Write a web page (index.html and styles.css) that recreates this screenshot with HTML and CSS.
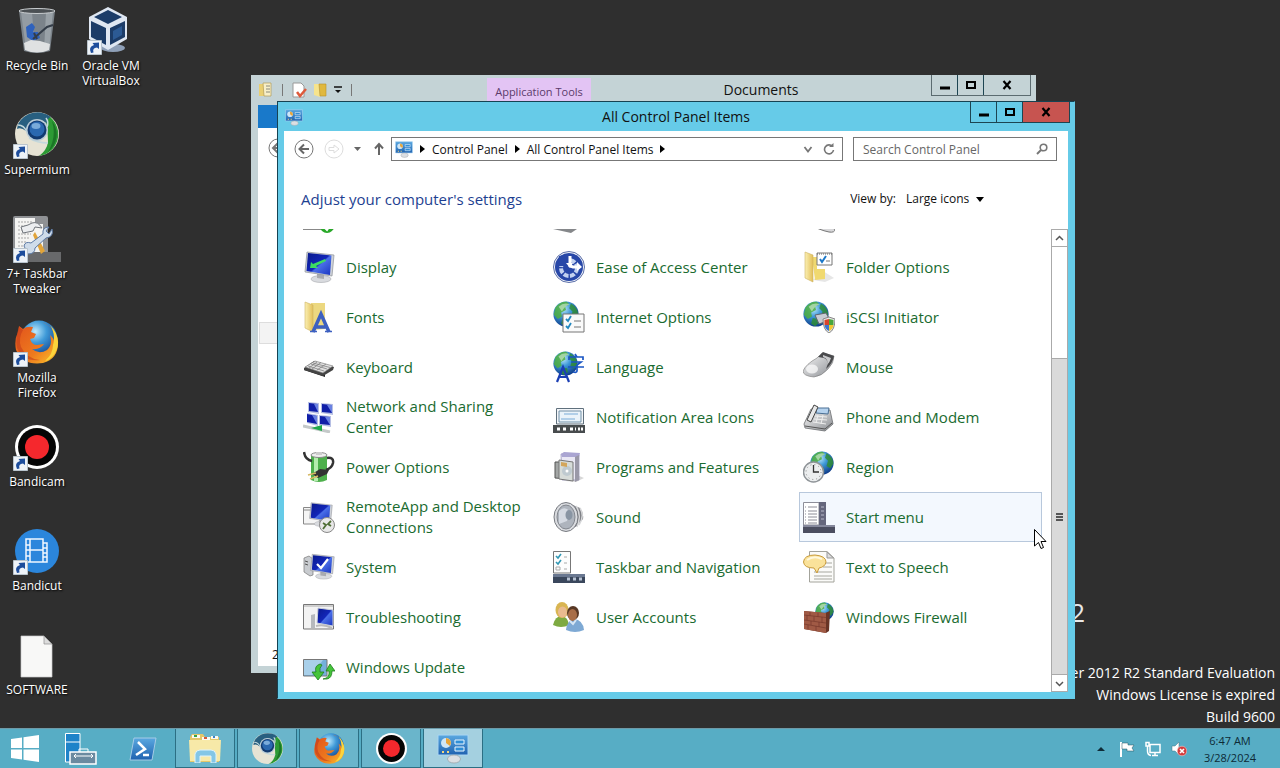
FILE: index.html
```html
<!DOCTYPE html>
<html lang="en">
  <head>
    <meta charset="utf-8">
    <meta name="viewport" content="width=device-width, initial-scale=1.0">
    <title>All Control Panel Items</title>
    <link rel="stylesheet" href="styles.css">
  </head>
  <body>
    <!-- shared icon parts -->
    <svg class="sprite" aria-hidden="true">
      <defs>
        <radialGradient id="g-globe" cx="0.4" cy="0.3" r="0.75">
          <stop offset="0" stop-color="#bfe9fb"/>
          <stop offset="0.4" stop-color="#3f9ad8"/>
          <stop offset="1" stop-color="#0a3484"/>
        </radialGradient>
        <linearGradient id="g-screen" x1="0" y1="0" x2="1" y2="1">
          <stop offset="0" stop-color="#0a1a8c"/>
          <stop offset="0.5" stop-color="#1226b8"/>
          <stop offset="0.55" stop-color="#4a6fe8"/>
          <stop offset="1" stop-color="#1a34c0"/>
        </linearGradient>
        <linearGradient id="g-folder" x1="0" y1="0" x2="1" y2="0">
          <stop offset="0" stop-color="#fbf0b4"/>
          <stop offset="1" stop-color="#e2bf58"/>
        </linearGradient>
        <linearGradient id="g-grey" x1="0" y1="0" x2="1" y2="1">
          <stop offset="0" stop-color="#fafafa"/>
          <stop offset="1" stop-color="#8a8d92"/>
        </linearGradient>
        <linearGradient id="g-fox" x1="0" y1="0" x2="1" y2="1">
          <stop offset="0" stop-color="#e0501c"/>
          <stop offset="0.6" stop-color="#ee7a1e"/>
          <stop offset="1" stop-color="#fbc72c"/>
        </linearGradient>
        <linearGradient id="g-blue" x1="0" y1="0" x2="0" y2="1">
          <stop offset="0" stop-color="#5aa8e0"/>
          <stop offset="1" stop-color="#1f62b0"/>
        </linearGradient>
      </defs>
      <symbol id="globe" viewBox="0 0 32 32">
        <circle cx="16" cy="16" r="15.500" fill="url(#g-globe)"/>
        <path d="M3 8Q9 0 17 1L20 4L15 7L16 11L10 14L11 19L6 22L1 17Z" fill="#4fae3e" opacity="0.85"/>
        <path d="M22 3Q31 8 31 17L27 23L22 20L24 13L20 9ZM12 21L18 22L19 27L15 31L10 28Z" fill="#2f8f2e" opacity="0.8"/>
        <path d="M7 7Q13 1 21 4Q14 6 11 13Z" fill="#fff" opacity="0.45"/>
      </symbol>
      <symbol id="monitor" viewBox="0 0 32 32">
        <ellipse cx="18" cy="28" rx="10" ry="3.500" fill="#d9dbdf" stroke="#a6a8ad" stroke-width="0.600"/>
        <path d="M14 22L21 24L21 28L14 27Z" fill="#a9abb0"/>
        <path d="M4 1L31 4L29 25L2 21Z" fill="#cfd3da" stroke="#8d9096" stroke-width="0.700"/>
        <path d="M5 2L28.500 4.500L27 24L3.500 20Z" fill="url(#g-screen)"/>
      </symbol>
      <symbol id="cpanel" viewBox="0 0 32 32">
        <path d="M1 3H31V23H1Z" fill="url(#g-blue)" stroke="#a9d5f2"/>
        <circle cx="9" cy="11" r="5" fill="#cfe6f6"/>
        <path d="M9 11V6A5 5 0 0 1 13 14Z" fill="#e8a53a"/>
        <path d="M18 8H27V12H18ZM18 15H27V19H18Z" fill="#2f8ed6" stroke="#e9f5ff"/>
        <path d="M5 20H7M10 20H12" stroke="#f3d680" stroke-width="2"/>
        <ellipse cx="17" cy="27" rx="6.500" ry="4" fill="#dcdfe3" stroke="#9a9da2" stroke-width="0.700"/>
      </symbol>
      <symbol id="supermium" viewBox="0 0 44 44">
        <circle cx="22" cy="22" r="22" fill="#e6e3d4"/>
        <path d="M3 12A22 22 0 0 1 36 5Q31 8 33 13Q28 7 20 8Q12 10 11 19Q6 15 2 17Z" fill="#285f80"/>
        <path d="M35 5A22 22 0 0 1 24 44Q32 38 33 30Q33 23 32 17Q30 10 35 5Z" fill="#2c9a34"/>
        <path d="M37 9A22 22 0 0 1 33 40Q42 25 37 9Z" fill="#1b7526"/>
        <path d="M3 13Q9 13 12 20M32 15Q34 10 31 6M14 26Q22 31 33 31" fill="none" stroke="#c3d8dc" stroke-width="1.500"/>
        <circle cx="22" cy="18" r="11" fill="#b9cbd6"/>
        <circle cx="22" cy="18" r="9.500" fill="#123a70"/>
        <circle cx="22" cy="17" r="7.500" fill="#2a68b0"/>
        <ellipse cx="21" cy="14" rx="4.500" ry="3" fill="#9cc8ec" opacity="0.7"/>
      </symbol>
      <symbol id="firefox" viewBox="0 0 44 44">
        <circle cx="24" cy="19" r="18.500" fill="url(#g-globe)"/>
        <path d="M26 2Q41 7 43 23Q43 39 28 43Q8 46 1 30Q-1 20 3 12L4 6L8 9Q12 6 18 7L16 12L21 14L19 18L15 19Q17 25 22 25L29 24Q25 30 17 29Q24 35 32 30Q38 25 35 15Q40 19 39 24Q42 12 34 6Q30 3 26 2Z" fill="url(#g-fox)"/>
        <path d="M35 5Q46 16 42 29Q38 39 30 41Q38 34 38 25Q41 14 35 5Z" fill="#fbd43c"/>
        <path d="M4 7L8 10Q3 18 6 27Q12 39 25 40Q8 42 2 28Q0 17 4 7Z" fill="#c43e1b" opacity="0.6"/>
      </symbol>
      <symbol id="bandicam" viewBox="0 0 44 44">
        <circle cx="22" cy="22" r="22" fill="#fff"/>
        <circle cx="22" cy="22" r="19" fill="#050505"/>
        <circle cx="22" cy="22" r="12" fill="#f5282d"/>
      </symbol>
      <symbol id="arrow-link" viewBox="0 0 15 15">
        <path d="M0.500 0.500H14.500V14.500H0.500Z" fill="#eef3f8" stroke="#b9c4cd"/>
        <path d="M4 13Q1 7 7 5L5.500 3L12 2.500L12 9L10 7.500Q5 8 6.500 12.500Z" fill="#1d4d9c"/>
      </symbol>
    </svg>

    <div class="desktop">
      <div class="desktop-icons">
        <a href="#" class="shortcut">
          <svg class="shortcut-icon" viewBox="0 0 48 48">
            <path d="M6 4L11 44Q24 48 37 44L42 4Z" fill="#7b838a"/>
            <path d="M8 5L13 43Q18 45 22 45L19 5Z" fill="#a5adb4" opacity="0.6"/>
            <path d="M33 5L31 44L36 43L40 5Z" fill="#aeb6bb" opacity="0.6"/>
            <path d="M13 20L19 16L22 20L20 25L25 25L27 31L20 34L14 30Z" fill="#2f62bd"/>
            <path d="M20 32L34 20L40 18M21 26L24 32" fill="none" stroke="#343d48" stroke-width="2"/>
            <path d="M11 36L18 33L27 34L37 37L36 43Q24 48 12 43Z" fill="#dfe1e2"/>
            <ellipse cx="24" cy="4" rx="18" ry="2.500" fill="#4b5054" stroke="#c9cdd0"/>
          </svg>
          <span>Recycle Bin</span>
        </a>
        <a href="#" class="shortcut">
          <svg class="shortcut-icon" viewBox="0 0 48 48">
            <use href="#supermium" x="2" y="1" width="44" height="44"/>
            <use href="#arrow-link" x="0" y="33" width="15" height="15"/>
          </svg>
          <span>Supermium</span>
        </a>
        <a href="#" class="shortcut">
          <svg class="shortcut-icon" viewBox="0 0 48 48">
            <rect x="0" y="1" width="35" height="40" rx="2" fill="#8f9194"/>
            <path d="M2 3H22V9H30V40H2Z" fill="#f4f4f2"/>
            <path d="M5 7H20M5 11H18M5 15H18M5 19H18M5 23H16M5 27H14M5 31H14" stroke="#a5a5a5" stroke-dasharray="2 1"/>
            <path d="M15 37H48V47H15Z" fill="#68696b"/>
            <path d="M22 17L32 36L28 39L20 20Z" fill="#e1a43a"/>
            <path d="M8 12L15 10L19 8Q25 6 29 13L22 12L20 16L10 18Z" fill="#eceef0" stroke="#70757b"/>
            <path d="M11 31Q12 26 18 28L30 19Q29 12 36 12L33 16L36 19L39 14Q41 22 33 23L22 33Q22 39 15 39Z" fill="#cfdcea" stroke="#5d7aa5"/>
            <use href="#arrow-link" x="0" y="33" width="15" height="15"/>
          </svg>
          <span>7+ Taskbar Tweaker</span>
        </a>
        <a href="#" class="shortcut">
          <svg class="shortcut-icon" viewBox="0 0 48 48">
            <use href="#firefox" x="2" y="1" width="44" height="44"/>
            <use href="#arrow-link" x="0" y="33" width="15" height="15"/>
          </svg>
          <span>Mozilla Firefox</span>
        </a>
        <a href="#" class="shortcut">
          <svg class="shortcut-icon" viewBox="0 0 48 48">
            <use href="#bandicam" x="2" y="2" width="44" height="44"/>
            <use href="#arrow-link" x="0" y="33" width="15" height="15"/>
          </svg>
          <span>Bandicam</span>
        </a>
        <a href="#" class="shortcut">
          <svg class="shortcut-icon" viewBox="0 0 48 48">
            <circle cx="24" cy="24" r="22" fill="#2b86dc"/>
            <path d="M13 12H30V35H13ZM17 12V35M30 12V35M17 23H30M13 18H17M13 23H17M13 29H17M30 16H34V35H30M30 21H34M30 26H34M30 30H34" fill="none" stroke="#f1f8ff" stroke-width="1.500"/>
            <use href="#arrow-link" x="0" y="33" width="15" height="15"/>
          </svg>
          <span>Bandicut</span>
        </a>
        <a href="#" class="shortcut">
          <svg class="shortcut-icon" viewBox="0 0 48 48">
            <path d="M8 5H31L39 13V46H8Z" fill="#f8f8f7" stroke="#c9c9c9" stroke-width="0.700"/>
            <path d="M31 5V13H39Z" fill="#dcdcdc" stroke="#8e8e8e" stroke-width="0.700"/>
          </svg>
          <span>SOFTWARE</span>
        </a>
        <a href="#" class="shortcut">
          <svg class="shortcut-icon" viewBox="0 0 48 48">
            <ellipse cx="26" cy="41" rx="12" ry="4" fill="#8fa0b8"/>
            <path d="M21 0L40 10V32L21 43L2 32V10Z" fill="#dfe7f2"/>
            <path d="M21 3L35 10L21 17L7 10ZM4 14L19 21V38L4 30ZM38 14L23 21V38L38 30Z" fill="#1c3c68"/>
            <path d="M26 24L35 19V28L26 33Z" fill="#2c5a94"/>
            <use href="#arrow-link" x="0" y="33" width="15" height="15"/>
          </svg>
          <span>Oracle VM VirtualBox</span>
        </a>
      </div>

      <div class="brand">2012</div>
      <div class="watermark">
        <p>Windows Server 2012 R2 Standard Evaluation</p>
        <p>Windows License is expired</p>
        <p>Build 9600</p>
      </div>

      <div class="window documents">
        <div class="titlebar">
          <div class="quick-access">
            <svg width="16" height="16" viewBox="0 0 16 16"><path d="M1 2H6V14H1Z" fill="#e9cf72"/><path d="M5 1H13V14H6Z" fill="#f7efc8" stroke="#b29b55" stroke-width="0.700"/><path d="M8 4H12M8 7H12M8 10H12" stroke="#8a8a7c"/></svg>
            <span class="divider"></span>
            <svg width="16" height="16" viewBox="0 0 16 16"><path d="M2 1H10L13 4V15H2Z" fill="#fff" stroke="#999"/><path d="M6 10L9 14L15 7" fill="none" stroke="#dd5a3c" stroke-width="2.500"/></svg>
            <svg width="16" height="16" viewBox="0 0 16 16"><path d="M2 2H7L8 15L2 13Z" fill="#f6e48d"/><path d="M7 2H14V14H8Z" fill="#e0b83e" stroke="#b9922a" stroke-width="0.600"/></svg>
            <svg width="10" height="10" viewBox="0 0 10 10"><path d="M1 2H9" stroke="#111" stroke-width="1.500"/><path d="M2 5H8L5 8Z" fill="#111"/></svg>
            <span class="divider"></span>
          </div>
          <span class="tool-tab">Application Tools</span>
          <h2>Documents</h2>
          <div class="window-buttons">
            <button aria-label="Minimize documents"><svg viewBox="0 0 12 10"><path d="M1 8H11" stroke="#000" stroke-width="3"/></svg></button>
            <button aria-label="Maximize documents"><svg viewBox="0 0 12 10"><path d="M2 2H10V8H2Z" fill="none" stroke="#000" stroke-width="2"/></svg></button>
            <button class="close" aria-label="Close documents"><svg viewBox="0 0 12 10"><path d="M2.500 1L9.500 9M9.500 1L2.500 9" stroke="#000" stroke-width="2.200"/></svg></button>
          </div>
        </div>
        <div class="window-content">
          <div class="file-tab"></div>
          <svg class="documents-back" viewBox="0 0 20 20"><circle cx="10" cy="10" r="9" fill="#fff" stroke="#777"/><path d="M15 10H5M10 5L5 10L10 15" fill="none" stroke="#777" stroke-width="2"/></svg>
          <div class="documents-tree"></div>
          <p class="documents-status">2 items</p>
        </div>
      </div>

      <div class="window control-panel">
        <div class="titlebar">
          <svg class="title-icon" width="18" height="18"><use href="#cpanel"/></svg>
          <h1>All Control Panel Items</h1>
          <div class="window-buttons">
            <button aria-label="Minimize"><svg viewBox="0 0 12 10"><path d="M1 8H11" stroke="#000" stroke-width="3"/></svg></button>
            <button aria-label="Maximize"><svg viewBox="0 0 12 10"><path d="M2 2H10V8H2Z" fill="none" stroke="#000" stroke-width="2"/></svg></button>
            <button class="close" aria-label="Close"><svg viewBox="0 0 12 10"><path d="M2.500 1L9.500 9M9.500 1L2.500 9" stroke="#000" stroke-width="2.200"/></svg></button>
          </div>
        </div>

        <div class="window-content">
          <div class="nav">
            <button class="nav-button" aria-label="Back"><svg viewBox="0 0 20 20"><circle cx="10" cy="10" r="9" fill="#fff" stroke="#777"/><path d="M15 10H5.500M10 5.500L5.500 10L10 14.500" fill="none" stroke="#666" stroke-width="2"/></svg></button>
            <button class="nav-button" aria-label="Forward"><svg viewBox="0 0 20 20"><circle cx="10" cy="10" r="9" fill="#fff" stroke="#ddd"/><path d="M5 8.500H10V6L15 10L10 14V11.500H5Z" fill="#fff" stroke="#ddd"/></svg></button>
            <button class="nav-button narrow" aria-label="Recent"><svg viewBox="0 0 10 20"><path d="M0 8H7L3.500 12Z" fill="#666"/></svg></button>
            <button class="nav-button narrow" aria-label="Up"><svg viewBox="0 0 10 20"><path d="M5 16V6M1 9.500L5 5L9 9.500" fill="none" stroke="#666" stroke-width="2"/></svg></button>
            <div class="address">
              <svg width="18" height="18"><use href="#cpanel"/></svg>
              <svg class="crumb-arrow" viewBox="0 0 5 8"><path d="M0 0L5 4L0 8Z"/></svg>
              <a href="#">Control Panel</a>
              <svg class="crumb-arrow" viewBox="0 0 5 8"><path d="M0 0L5 4L0 8Z"/></svg>
              <a href="#">All Control Panel Items</a>
              <svg class="crumb-arrow" viewBox="0 0 5 8"><path d="M0 0L5 4L0 8Z"/></svg>
              <button class="address-button" aria-label="Previous locations"><svg width="12" height="12" viewBox="0 0 12 12"><path d="M2.500 4L6 8.500L9.500 4" fill="none" stroke="#777" stroke-width="1.800"/></svg></button>
              <button class="address-button" aria-label="Refresh"><svg width="12" height="12" viewBox="0 0 12 12"><path d="M9.500 3.500A4.500 4.500 0 1 0 10.500 7" fill="none" stroke="#777" stroke-width="1.600"/><path d="M6 4H10.500V0Z" fill="#777"/></svg></button>
            </div>
            <label class="search">
              <input type="text" placeholder="Search Control Panel" aria-label="Search Control Panel">
              <svg width="12" height="12" viewBox="0 0 12 12"><circle cx="7.500" cy="4.500" r="3.300" fill="none" stroke="#777" stroke-width="1.600"/><path d="M5 7L1 11" stroke="#777" stroke-width="2"/></svg>
            </label>
          </div>

          <div class="heading">
            <h2>Adjust your computer's settings</h2>
            <label for="view-by">View by:</label>
            <select id="view-by">
              <option>Large icons</option>
            </select>
            <svg class="caret" viewBox="0 0 8 5"><path d="M0 0H8L4 5Z"/></svg>
          </div>

          <div class="panel">
            <div class="items">
              <div class="item">
                <svg class="item-icon" viewBox="0 0 32 32"><path d="M0 3H30V28.500H0Z" fill="#f4f4f4" stroke="#888"/><circle cx="24" cy="25" r="7" fill="#28a828"/><path d="M21 26L24 29L28 23" fill="none" stroke="#fff" stroke-width="2"/></svg>
              </div>
              <div class="item">
                <svg class="item-icon" viewBox="0 0 32 32"><path d="M2 8L18 4L26 12L24 28L18 32L0 28Z" fill="#85878a"/></svg>
              </div>
              <div class="item">
                <svg class="item-icon" viewBox="0 0 32 32"><path d="M10 25Q22 24 32 28Q32 32 26 31Q21 30 16 28Z" fill="#d8d8da" stroke="#777"/></svg>
              </div>

              <a href="#" class="item">
                <svg class="item-icon" viewBox="0 0 32 32"><use href="#monitor" width="32" height="32"/><path d="M7 17L8 11L10 13L22 8L23 10L13 15L15 17Z" fill="#3ddc62"/></svg>
                <span>Display</span>
              </a>
              <a href="#" class="item">
                <svg class="item-icon" viewBox="0 0 32 32"><circle cx="16" cy="16" r="15.500" fill="#f1f4fa" stroke="#5c6fa8"/><circle cx="16" cy="16" r="14" fill="#2747a8"/><circle cx="16" cy="17" r="8" fill="none" stroke="#c3d2f0" stroke-width="4" stroke-dasharray="5 1.500"/><path d="M6 5H16V15H5Z" fill="#2747a8"/><path d="M17 5V15L20 16H26" fill="none" stroke="#fff" stroke-width="3"/><path d="M24 11L29 16L24 20Z" fill="#fff"/><path d="M13 12L17 17L20 12Z" fill="#fff"/></svg>
                <span>Ease of Access Center</span>
              </a>
              <a href="#" class="item">
                <svg class="item-icon" viewBox="0 0 32 32"><path d="M20 20L31 27L22 31L10 29Z" fill="#d6d6d6" opacity="0.6"/><path d="M9 6H14V18H22V28L12 29Z" fill="#f0d970"/><path d="M2 1L10 4V31L2 27Z" fill="url(#g-folder)" stroke="#cdb262" stroke-width="0.600"/><path d="M14 2H29V14H14Z" fill="#fff" stroke="#777"/><path d="M14 3H29" stroke="#666" stroke-dasharray="1 1"/><path d="M17 8L19 11L23 5" fill="none" stroke="#1c78c8" stroke-width="2"/><path d="M23 10H27" stroke="#777"/></svg>
                <span>Folder Options</span>
              </a>

              <a href="#" class="item">
                <svg class="item-icon" viewBox="0 0 32 32"><path d="M8 2H22V28L10 29Z" fill="#ecd880"/><path d="M2 1L10 4V31L2 27Z" fill="url(#g-folder)" stroke="#cdb262" stroke-width="0.600"/><path d="M10 31L18 13L26 31M13 26H23" fill="none" stroke="#3d60c0" stroke-width="3.500"/><path d="M7 30.500H14M22 30.500H29" stroke="#3d60c0" stroke-width="1.500"/></svg>
                <span>Fonts</span>
              </a>
              <a href="#" class="item">
                <svg class="item-icon" viewBox="0 0 32 32"><use href="#globe" width="26" height="26"/><path d="M10 13H31V31H10Z" fill="#fafafa" stroke="#777"/><path d="M13 18L15 20L18 15M13 25L15 27L18 22" fill="none" stroke="#2388bf" stroke-width="1.800"/><path d="M21 20H28M21 26H28" stroke="#777"/></svg>
                <span>Internet Options</span>
              </a>
              <a href="#" class="item">
                <svg class="item-icon" viewBox="0 0 32 32"><use href="#globe" width="26" height="26"/><path d="M12 14L23 12L27 19L16 23Z" fill="#c8ccd3" stroke="#60656e"/><path d="M26 16L32 18Q32 29 26 32Q20 29 20 18Z" fill="#e7e7e7" stroke="#888"/><path d="M26 18V24H21.500V19Z" fill="#d8432c"/><path d="M26 18V24H30.500V19Z" fill="#48a63c"/><path d="M26 30V24H21.500Q22 28 26 30Z" fill="#3b74d0"/><path d="M26 30V24H30.500Q30 28 26 30Z" fill="#f3c832"/></svg>
                <span>iSCSI Initiator</span>
              </a>

              <a href="#" class="item">
                <svg class="item-icon" viewBox="0 0 32 32"><path d="M1 17L22 24L22 26L19 25L1 19Z" fill="#222"/><path d="M1 17L11 10L31 16L30 19L20 25L1 19Z" fill="#444"/><path d="M2 16L12 10L30 15L20 22Z" fill="#e0e0e0" stroke="#777" stroke-width="0.600"/><path d="M5 15L21 20M8 13L24 18M10 12L27 16.500M9 18L18 11.500M14 19L23 13M6 17L14 11" stroke="#777" stroke-width="0.700"/></svg>
                <span>Keyboard</span>
              </a>
              <a href="#" class="item">
                <svg class="item-icon" viewBox="0 0 32 32"><use href="#globe" width="25" height="25"/><path d="M4 31L10 16L16 31M6 26H14" fill="none" stroke="#1a3eb4" stroke-width="2.200"/><path d="M16 9V6H30V9M22 3L24 6M18 11H28L24 14V20Q24 22 20 21M15 16H31" fill="none" stroke="#1a56c4" stroke-width="1.700"/></svg>
                <span>Language</span>
              </a>
              <a href="#" class="item">
                <svg class="item-icon" viewBox="0 0 32 32"><path d="M0 20Q3 13 14 7L19 2L31 5Q31 12 25 18Q19 25 11 26Q0 25 0 20Z" fill="url(#g-grey)" stroke="#777" stroke-width="0.600"/><path d="M15 6L20 1L31 5Q30 12 23 18Q27 9 21 7Z" fill="#4a4b4d"/><path d="M20 4L28 7Q27 11 24 14Q26 8 20 6Z" fill="#c9cacc"/><ellipse cx="9" cy="18" rx="6" ry="4.500" fill="#fff" opacity="0.700"/></svg>
                <span>Mouse</span>
              </a>

              <a href="#" class="item">
                <svg class="item-icon" viewBox="0 0 32 32"><path d="M5 1L16 2V13L5 11ZM18 2L30 3V14L18 12ZM4 12L15 14V25L4 22ZM16 14L28 15V26L16 24Z" fill="#b6bfe4"/><path d="M6 2L15 3V11L6 10ZM19 3L29 4V12L19 11ZM4 13L14 15V23L4 21ZM17 15L27 16V24L17 23Z" fill="#101fa8"/><path d="M11 3L15 3V11ZM24 4L29 4V12ZM9 14L14 15V23ZM22 16L27 16V24Z" fill="#6a82e2"/><path d="M0 25L27 31" stroke="#c4c9c9" stroke-width="3"/><path d="M8 27L19 24V30Z" fill="#20a84a"/></svg>
                <span>Network and Sharing Center</span>
              </a>
              <a href="#" class="item">
                <svg class="item-icon" viewBox="0 0 32 32"><path d="M3.500 7.500H30.500V23H3.500Z" fill="#f3f6f9" stroke="#60707d"/><path d="M6 10H28V21H6Z" fill="#eaf3fa" stroke="#7391a8"/><path d="M11 13H25M8 18H22" stroke="#79abd8"/><path d="M0 24H32V32H0Z" fill="#474b4d"/><path d="M4 28H7M10 28H13M17 28H20M22 28H23M25 28H27M28 28H30" stroke="#fff" stroke-width="3"/></svg>
                <span>Notification Area Icons</span>
              </a>
              <a href="#" class="item">
                <svg class="item-icon" viewBox="0 0 32 32"><path d="M1 23L8 8L27 9L30 23L22 30L2 27Z" fill="url(#g-grey)" stroke="#6b6d70" stroke-width="0.800"/><path d="M2 25L22 28L29 22" fill="none" stroke="#555"/><path d="M14 7H26L25 13L13 12Z" fill="#b5d2ee" stroke="#4a6f94"/><path d="M12 15L24 16M11 18L24 19M10 21L23 23M15 14L13 22M20 14L18 23" stroke="#eee"/><path d="M4 19L11 4L15 6L8 21Z" fill="#e9e9e9" stroke="#444"/></svg>
                <span>Phone and Modem</span>
              </a>

              <a href="#" class="item">
                <svg class="item-icon" viewBox="0 0 32 32"><path d="M8 4H24V29Q16 33 8 29Z" fill="#4eb04c"/><path d="M11 4H15V30H11Z" fill="#b4ecad"/><ellipse cx="16" cy="4" rx="8" ry="2.500" fill="#eee" stroke="#888"/><path d="M13 1H19V4H13Z" fill="#ccc"/><path d="M1 1Q2 9 9 10M24 7Q31 6 30 12Q29 17 23 19" fill="none" stroke="#333" stroke-width="2.500"/><path d="M9 23L17 18L26 19L24 23L15 27Z" fill="#333"/><path d="M5 24L13 22M7 28L15 25" stroke="#d6b862" stroke-width="1.800"/></svg>
                <span>Power Options</span>
              </a>
              <a href="#" class="item">
                <svg class="item-icon" viewBox="0 0 32 32"><path d="M24 24L31 27L23 31L13 30Z" fill="#d7d7d7"/><path d="M8 3L26 4V29H9Z" fill="#e9e7f4" stroke="#8e8ab4" stroke-width="0.700"/><path d="M8 3L11 1L27 2L26 6L9 6Z" fill="#aaa5d2"/><path d="M22 6L26 4V29L22 31Z" fill="#9a98a8"/><path d="M2 11H16V28L2 27Z" fill="#a3a6a5" stroke="#555"/><path d="M6 9L20 11V30L6 28Z" fill="#d7dcd9" stroke="#777"/><circle cx="14" cy="20" r="5" fill="#bfcad0"/><circle cx="14" cy="20" r="1.500" fill="#fff"/><path d="M8 11L14 12V16L8 15Z" fill="#d3a65c"/></svg>
                <span>Programs and Features</span>
              </a>
              <a href="#" class="item">
                <svg class="item-icon" viewBox="0 0 32 32"><use href="#globe" x="7" y="0" width="24" height="24"/><circle cx="10.500" cy="21" r="10" fill="#eceeef" stroke="#8f9498" stroke-width="1.500"/><path d="M10.500 14V21H16" fill="none" stroke="#333" stroke-width="1.300"/><circle cx="10.500" cy="21" r="7.500" fill="none" stroke="#888" stroke-dasharray="1 3"/></svg>
                <span>Region</span>
              </a>

              <a href="#" class="item">
                <svg class="item-icon" viewBox="0 0 32 32"><path d="M0.500 6.500H22V23H0.500ZM0 9H20" fill="#f5f5f5" stroke="#888"/><use href="#monitor" x="5" y="1" width="25" height="25"/><circle cx="24" cy="24" r="7.500" fill="#e8e8e8" stroke="#888"/><path d="M20 22L23 24L20 28M28 20L25 23L28 25" fill="none" stroke="#4f6e35" stroke-width="1.800"/></svg>
                <span>RemoteApp and Desktop Connections</span>
              </a>
              <a href="#" class="item">
                <svg class="item-icon" viewBox="0 0 32 32"><path d="M15 2L27 7Q31 12 30 18L24 25L14 30Z" fill="#808287"/><path d="M23 5Q29 14 24 26M27 7Q32 15 26 24" fill="none" stroke="#d7d8da" stroke-width="1.500"/><ellipse cx="13" cy="16" rx="12" ry="14.500" fill="#dadce0" stroke="#777a80"/><ellipse cx="13" cy="16" rx="9" ry="12" fill="#aeb4bd" stroke="#83878e"/><path d="M6 10Q12 4 17 11L14 20L6 23Z" fill="#dfe4eb" opacity="0.800"/><ellipse cx="16" cy="14" rx="3.500" ry="5" fill="#8995a3"/></svg>
                <span>Sound</span>
              </a>
              <a href="#" class="item active">
                <svg class="item-icon" viewBox="0 0 32 32"><path d="M0.500 1.500H16V24H0.500Z" fill="#fff" stroke="#8d8e99"/><path d="M2 6H3M5 6H14M2 10H3M5 10H14M2 13H3M5 13H14M2 16H3M5 16H14M2 19H3M5 19H14M2 22H3M5 22H14" stroke="#8c8c96"/><path d="M16 1H23V24H16Z" fill="#65677d"/><path d="M18 6H21M18 10H21M18 14H21M18 18H21" stroke="#b9bbcb"/><path d="M0 24H32V32H0Z" fill="#4b4e60"/><path d="M0 24H32V26H0Z" fill="#85889c"/></svg>
                <span>Start menu</span>
              </a>

              <a href="#" class="item">
                <svg class="item-icon" viewBox="0 0 32 32"><path d="M1 7L6 5L10 8V24L7 25L1 21Z" fill="#c8cbcf" stroke="#777" stroke-width="0.700"/><path d="M2 10L5 11M2 13L5 14" stroke="#555"/><use href="#monitor" x="6" y="2" width="26" height="27"/><path d="M14 13L18 17L25 8" fill="none" stroke="#fff" stroke-width="2.200"/></svg>
                <span>System</span>
              </a>
              <a href="#" class="item">
                <svg class="item-icon" viewBox="0 0 32 32"><path d="M0.500 0.500H17.500V22H0.500Z" fill="#fdfdfd" stroke="#777"/><path d="M3 5L5 7L8 3M3 11L5 13L8 9" fill="none" stroke="#3298b4" stroke-width="1.600"/><path d="M3 16H7V19H3ZM11 6H14M11 12H14M11 18H14" fill="none" stroke="#aaa"/><path d="M0 23H32V32H0Z" fill="#3a475c"/><path d="M0 23H32V26H0Z" fill="#6a7891"/><path d="M14 28H17M20 28H23M26 28H29" stroke="#b8c3d4" stroke-width="3"/></svg>
                <span>Taskbar and Navigation</span>
              </a>
              <a href="#" class="item">
                <svg class="item-icon" viewBox="0 0 32 32"><path d="M6.500 0.500H24L31 7V31H6.500Z" fill="#fbfbf9" stroke="#a3a39b"/><path d="M24 1V7H30.500Z" fill="#ddd" stroke="#999"/><path d="M22 12H29M20 16H29M11 21H29M11 25H29M11 28H29" stroke="#a7a79f"/><path d="M0.500 11Q1 4 12 4Q23 5 23 11Q22 16 16 17L14 22L11 17Q1 17 0.500 11Z" fill="#fae29a" stroke="#c99b3b"/><path d="M4 9Q11 4 19 8" fill="none" stroke="#fff8dc" stroke-width="2"/></svg>
                <span>Text to Speech</span>
              </a>

              <a href="#" class="item">
                <svg class="item-icon" viewBox="0 0 32 32"><path d="M0.500 3.500H30.500V28H0.500Z" fill="#f3f3f3" stroke="#777"/><path d="M1 5H30" stroke="#aaa"/><path d="M8 14L12 13V27H8Z" fill="#b6b9bd"/><path d="M15 7L30 9V25L14 22Z" fill="url(#g-screen)" stroke="#cbd0da"/><path d="M13 25Q21 23 29 27" fill="none" stroke="#bbb" stroke-width="2"/></svg>
                <span>Troubleshooting</span>
              </a>
              <a href="#" class="item">
                <svg class="item-icon" viewBox="0 0 32 32"><path d="M0 24Q2 15 9 15Q15 16 16 24Q8 28 0 24Z" fill="#7eaa42"/><ellipse cx="9" cy="9" rx="6.500" ry="8" fill="#d9b552"/><ellipse cx="9.500" cy="11" rx="4.500" ry="5.500" fill="#e9bb90"/><path d="M13 29Q14 19 21 18Q30 19 31 29Q22 33 13 29Z" fill="#7ea9d4"/><ellipse cx="20" cy="12" rx="6" ry="7" fill="#573724"/><ellipse cx="19.500" cy="14" rx="4.500" ry="6" fill="#a86e48"/><path d="M17 20L20 23L23 19" fill="none" stroke="#d7e6f4" stroke-width="2"/></svg>
                <span>User Accounts</span>
              </a>
              <a href="#" class="item">
                <svg class="item-icon" viewBox="0 0 32 32"><use href="#globe" x="12" y="1" width="19" height="19"/><path d="M1 10L22 12L27 10L26 30L23 32L1 28Z" fill="#693426"/><path d="M1 10L23 12V32L1 28Z" fill="#a05a45"/><path d="M1 14L23 16.500M1 19L23 22M1 23L23 27M7 11V14.500M15 12V15.500M4 14.500V19M11 15.500V20M19 16V21.500M8 20V24M16 21V26M5 24V28M13 25V30" stroke="#75382b" stroke-width="0.700"/></svg>
                <span>Windows Firewall</span>
              </a>

              <a href="#" class="item">
                <svg class="item-icon" viewBox="0 0 32 32"><path d="M0.500 8.500H24V25H0.500Z" fill="#74b0dc" stroke="#777"/><path d="M1 9H20L9 24H1Z" fill="#a9d0ea"/><path d="M17 13Q11 15 13 21H9L15 29L21 21H17Q16 17 19 14Z" fill="#45c43a" stroke="#1e7f1e" stroke-width="0.800"/><path d="M20 28Q27 27 26 20H23L27 13L32 20H29Q29 27 24 28Z" fill="#45c43a" stroke="#1e7f1e" stroke-width="0.800"/></svg>
                <span>Windows Update</span>
              </a>
            </div>

            <div class="scrollbar">
              <button aria-label="Scroll up"><svg width="9" height="9" viewBox="0 0 9 9"><path d="M1 6L4.500 2.500L8 6" fill="none" stroke="#555" stroke-width="1.500"/></svg></button>
              <div class="track"></div>
              <div class="thumb"><span></span><span></span><span></span></div>
              <button aria-label="Scroll down"><svg width="9" height="9" viewBox="0 0 9 9"><path d="M1 3L4.500 6.500L8 3" fill="none" stroke="#555" stroke-width="1.500"/></svg></button>
            </div>
          </div>
        </div>
      </div>

      <svg class="cursor" width="13" height="21" viewBox="0 0 13 21"><path d="M0.500 0.500V17L4.500 13.500L7 19.500L9.500 18.500L7 12.500H12Z" fill="#fff" stroke="#000"/></svg>
    </div>

    <div class="taskbar">
      <button class="start" aria-label="Start">
        <svg width="28" height="28" viewBox="0 0 28 28"><path d="M0 4L11 2.500V13H0ZM12.500 2.300L28 0V13H12.500ZM0 14.500H11V24.500L0 23ZM12.500 14.500H28V27L12.500 24.700Z" fill="#fff"/></svg>
      </button>
      <button class="task" aria-label="Server Manager">
        <svg width="32" height="32" viewBox="0 0 32 32"><path d="M0.500 0.500H15V29H0.500Z" fill="#1f83c9" stroke="#fff"/><path d="M1 9H15" stroke="#fff"/><path d="M5 19H31V31H5Z" fill="#6b8aa0" stroke="#fff" stroke-width="1.500"/><path d="M14 19V16H23V19M9 23H28M11 21L9 23L11 25M26 21L28 23L26 25" fill="none" stroke="#fff"/></svg>
      </button>
      <button class="task" aria-label="PowerShell">
        <svg width="28" height="24" viewBox="0 0 28 24"><path d="M5 1H27L23 23H1Z" fill="url(#g-blue)" stroke="#a5cbe6"/><path d="M9 5L16 12L7 18M14 18H20" fill="none" stroke="#fff" stroke-width="2.500"/></svg>
      </button>
      <button class="task open" aria-label="File Explorer">
        <svg width="32" height="30" viewBox="0 0 32 30"><path d="M1 4L3 1H14L16 4H30V29H1Z" fill="#e4c76a"/><path d="M3 2H11V5H3ZM13 4H21V7H13ZM22 3H29V6H22Z" fill="#fbfaf2"/><path d="M5 3H8" stroke="#36a345" stroke-width="2"/><path d="M15 5H18" stroke="#d85a38" stroke-width="2"/><path d="M24 4H26" stroke="#3d83c9" stroke-width="2"/><path d="M0 7H32L31 28H1Z" fill="#f7e9a8"/><path d="M6 30V21Q7 17 11 17H22Q26 17 27 21V30H22V23H11V30Z" fill="#83c6e6" stroke="#dff3fb"/></svg>
      </button>
      <button class="task open" aria-label="Supermium"><svg width="31" height="31"><use href="#supermium"/></svg></button>
      <button class="task open" aria-label="Mozilla Firefox"><svg width="31" height="31"><use href="#firefox"/></svg></button>
      <button class="task open" aria-label="Bandicam"><svg width="31" height="31"><use href="#bandicam"/></svg></button>
      <button class="task open current" aria-label="Control Panel"><svg width="32" height="32"><use href="#cpanel"/></svg></button>

      <div class="tray">
        <button aria-label="Show hidden icons"><svg width="16" height="16" viewBox="0 0 16 16"><path d="M4 10H12L8 6Z" fill="#0f2c38"/></svg></button>
        <button aria-label="Action Center"><svg width="16" height="16" viewBox="0 0 16 16"><path d="M2 1V16" stroke="#fff" stroke-width="2"/><path d="M3 2H9V4L15 4L13 7L15 10H8V8H3Z" fill="#fff" stroke="#24505f" stroke-width="0.500"/></svg></button>
        <button aria-label="Network"><svg width="16" height="16" viewBox="0 0 16 16"><path d="M5 3.500H15V11.500H5ZM10 12V14M7 14.500H13M1 1.500H4V5H1ZM2.500 5V10Q2.500 14 6 14.500" fill="none" stroke="#fff" stroke-width="1.500"/></svg></button>
        <button aria-label="Volume"><svg width="16" height="16" viewBox="0 0 16 16"><path d="M1 5H4L8 1V14L4 10H1Z" fill="#fff" stroke="#467584" stroke-width="0.500"/><circle cx="11" cy="10" r="4.800" fill="#d43c3c" stroke="#f4cccc" stroke-width="0.600"/><path d="M9 8L13 12M13 8L9 12" stroke="#fff" stroke-width="1.600"/></svg></button>
        <div class="clock">
          <span>6:47 AM</span>
          <span>3/28/2024</span>
        </div>
      </div>
    </div>
  </body>
</html>
```

FILE: styles.css
```css
* {
  box-sizing: border-box;
}
body {
  margin: 0;
  height: 100vh;
  display: flex;
  flex-direction: column;
  overflow: hidden;
  background-color: #2f2f2f;
  font-family: "Open Sans", "Noto Sans", sans-serif;
  font-size: 12px;
  color: #111;
}
h1,
h2,
p {
  margin: 0;
  font-weight: normal;
}
a {
  color: inherit;
  text-decoration: none;
}
button {
  display: flex;
  align-items: center;
  justify-content: center;
  margin: 0;
  padding: 0;
  border: none;
  background: none;
  font: inherit;
}
.sprite {
  position: absolute;
  width: 0;
  height: 0;
}

/* desktop */
.desktop {
  position: relative;
  flex: 1;
  min-height: 0;
}
.desktop-icons {
  display: grid;
  grid-auto-flow: column;
  grid-template-rows: repeat(auto-fill, 104px);
  grid-auto-columns: 74px;
  height: 100%;
}
.shortcut {
  display: flex;
  flex-direction: column;
  align-items: center;
  padding-top: 7px;
  color: #fff;
  line-height: 15px;
  text-align: center;
  text-shadow: 1px 1px 2px #000;
}
.shortcut-icon {
  width: 48px;
  height: 48px;
  margin-bottom: 3px;
  flex-shrink: 0;
}
.brand {
  position: absolute;
  right: 195px;
  bottom: 98px;
  color: #e8e8e8;
  font-size: 26px;
}
.watermark {
  position: absolute;
  right: 5px;
  bottom: 0;
  color: #fff;
  font-size: 14px;
  line-height: 22px;
  text-align: right;
}

/* windows */
.window {
  position: absolute;
  display: flex;
  flex-direction: column;
}
.titlebar {
  display: grid;
  grid-template-columns: 1fr auto 1fr;
  align-items: center;
  height: 30px;
}
.titlebar h1,
.titlebar h2 {
  font-size: 14px;
  line-height: 28px;
}
.window-buttons {
  display: flex;
  align-self: start;
  justify-self: end;
  border: 1px solid #1d4552;
  border-top: none;
}
.window-buttons button {
  width: 26px;
  height: 20px;
  border-right: 1px solid #1d4552;
}
.window-buttons .close {
  width: 46px;
  border-right: none;
}
.window-buttons svg {
  width: 12px;
  height: 10px;
}
.window-content {
  flex: 1;
  min-height: 0;
  display: flex;
  flex-direction: column;
  background-color: #fff;
}

.documents {
  left: 251px;
  right: 244px;
  top: 75px;
  bottom: 55px;
  padding: 0 7px 7px;
  background-color: #c4d3d6;
}
.documents .titlebar {
  display: flex;
}
.documents h2 {
  flex: 1;
  text-align: center;
}
.documents .window-buttons {
  margin-right: -2px;
  border-color: #5b6b70;
}
.quick-access {
  display: flex;
  align-items: center;
  gap: 5px;
  width: 229px;
}
.divider {
  width: 1px;
  height: 12px;
  margin: 0 3px;
  background-color: #777;
}
.tool-tab {
  align-self: stretch;
  width: 104px;
  margin-top: 3px;
  padding-top: 6px;
  background-color: #e3c4f4;
  color: #5b3b6b;
  font-size: 11px;
  text-align: center;
}
.file-tab {
  width: 60px;
  height: 23px;
  background-color: #1979ca;
}
.documents-back {
  width: 20px;
  height: 20px;
  margin: 10px;
}
.documents-tree {
  width: 200px;
  height: 22px;
  margin-top: 154px;
  margin-left: 1px;
  border: 1px solid #ddd;
  background-color: #f3f3f3;
}
.documents-status {
  margin-top: auto;
  padding: 0 14px 3px;
}

.control-panel {
  left: 277px;
  right: 205px;
  top: 101px;
  bottom: 29px;
  padding: 0 6px 6px;
  border: 1px solid #164252;
  border-right-color: #66cbe8;
  border-bottom-color: #66cbe8;
  background-color: #66cbe8;
}
.control-panel .titlebar {
  height: 29px;
}
.control-panel .window-buttons {
  margin-right: -2px;
}
.control-panel .close {
  background-color: #c75450;
}
.title-icon {
  margin-left: 1px;
}

/* navigation row */
.nav {
  display: flex;
  align-items: center;
  height: 36px;
  padding: 0 11px 0 10px;
}
.nav-button {
  width: 20px;
  height: 20px;
  margin-right: 10px;
}
.nav-button.narrow {
  width: 10px;
  margin-right: 7px;
}
.nav-button.narrow + .narrow {
  margin-left: 3px;
}
.nav-button svg {
  width: 100%;
  height: 100%;
}
.address {
  flex: 1;
  display: flex;
  align-items: center;
  gap: 7px;
  height: 24px;
  margin-right: 10px;
  padding: 0 6px 0 3px;
  border: 1px solid #777;
  white-space: nowrap;
}
.crumb-arrow {
  width: 5px;
  height: 8px;
}
.address-button {
  width: 14px;
}
.address-button:first-of-type {
  margin-left: auto;
}
.search {
  display: flex;
  align-items: center;
  width: 204px;
  height: 24px;
  padding: 0 8px;
  border: 1px solid #777;
}
.search input {
  flex: 1;
  min-width: 0;
  padding: 0 1px;
  border: none;
  outline: none;
  font: inherit;
}
.search input::placeholder {
  color: #666;
}

.heading {
  display: flex;
  align-items: center;
  padding: 21px 84px 19px 17px;
  line-height: 22px;
}
.heading h2 {
  margin-right: auto;
  color: #1e3f91;
  font-size: 15px;
}
.heading select {
  margin-left: 10px;
  padding: 0;
  appearance: none;
  border: none;
  background: none;
  color: inherit;
  font: inherit;
}
.caret {
  width: 8px;
  height: 5px;
  margin-left: 6px;
}

/* item list, scrolled to its end */
.panel {
  flex: 1;
  min-height: 0;
  display: flex;
}
.items {
  flex: 1;
  display: grid;
  grid-template-columns: repeat(auto-fill, 243px);
  grid-auto-rows: 50px;
  column-gap: 7px;
  align-content: end;
  padding-left: 15px;
  overflow: hidden;
}
.item {
  display: flex;
  align-items: center;
  gap: 11px;
  padding: 0 10px 0 3px;
  border: 1px solid transparent;
  color: #1a6b30;
  font-size: 15px;
  line-height: 21px;
}
.item.active,
.item:hover {
  border-color: #b8c8dc;
  background-color: #f3f8fe;
}
.item-icon {
  width: 32px;
  height: 32px;
  flex-shrink: 0;
}
.scrollbar {
  display: flex;
  flex-direction: column;
  width: 17px;
  border: 1px solid #aaa;
}
.scrollbar button {
  height: 16px;
}
.track {
  flex: 112;
  border-top: 1px solid #aaa;
}
.thumb {
  flex: 317;
  display: flex;
  flex-direction: column;
  align-items: center;
  justify-content: center;
  gap: 1px;
  border-top: 1px solid #aaa;
  border-bottom: 1px solid #aaa;
  background-color: #dadada;
}
.thumb span {
  width: 7px;
  height: 2px;
  background-color: #555;
}
.cursor {
  position: absolute;
  left: 1034px;
  top: 529px;
}

/* taskbar */
.taskbar {
  display: flex;
  align-items: stretch;
  gap: 2px;
  height: 40px;
  border-top: 1px solid #6d9aa8;
  background-color: #57adc5;
}
.start {
  width: 49px;
}
.task {
  width: 60px;
}
.task.open {
  border: 1px solid #2c6f84;
  border-top: none;
  background-color: #6ab5cb;
}
.task.current {
  background-color: #a4d0e0;
}
.tray {
  display: flex;
  align-items: center;
  gap: 10px;
  margin-left: auto;
  padding-right: 22px;
}
.clock {
  display: flex;
  flex-direction: column;
  width: 56px;
  margin-left: 5px;
  color: #0d2a35;
  font-size: 11px;
  line-height: 17px;
  text-align: center;
}
```
